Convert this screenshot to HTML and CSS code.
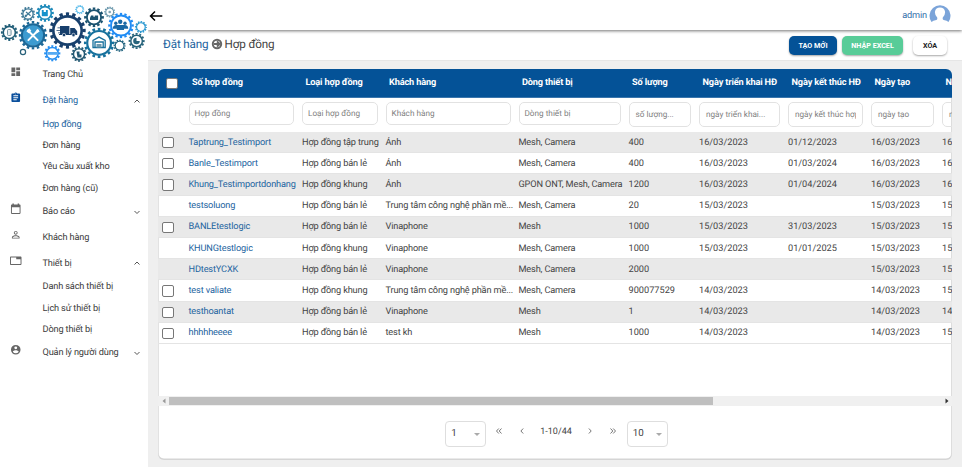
FILE: index.html
```html
<!DOCTYPE html>
<html lang="vi">
<head>
<meta charset="utf-8">
<title>Hợp đồng</title>
<link rel="stylesheet" href="styles.css">
</head>
<body>
<div class="app">
  <aside class="sidebar">
    <svg class="logo" viewBox="0 0 148 62">
      <defs>
        <symbol id="gear" viewBox="-12 -12 24 24">
          <circle r="8.3" fill="none" stroke="currentColor" stroke-width="2.2"/>
          <circle r="10.2" fill="none" stroke="currentColor" stroke-width="2.6" pathLength="120" stroke-dasharray="5.5 4.5" stroke-dashoffset="2.7"/>
        </symbol>
        <symbol id="gear-lg" viewBox="-12 -12 24 24">
          <circle r="9.2" fill="none" stroke="currentColor" stroke-width="1.7"/>
          <circle r="10.8" fill="none" stroke="currentColor" stroke-width="2" pathLength="160" stroke-dasharray="5 5" stroke-dashoffset="2.5"/>
        </symbol>
      </defs>
      <circle cx="33" cy="35.3" r="10.6" fill="#3c9bd0"/>
      <use href="#gear-lg" x="18.5" y="20.8" width="29" height="29" color="#1b6796"/>
      <path d="M28 30.5l9.6 9.6M38 30.5l-9.6 9.6" stroke="#fff" stroke-width="2" stroke-linecap="round"/>
      <path d="M26.3 31.3l3-3 2 2.4-2.6 2.6zM35 32.8l2.2-4 2.5 2.8-3.3 2z" fill="#fff"/>
      <use href="#gear-lg" x="49" y="12" width="37" height="37" color="#173f6c"/>
      <path d="M60 26h9.4v8H60zM70.2 28h4.4l2.6 3.2V35h-7zM57.5 27.5h3v.8h-3zM56.5 30h3.5v.8h-3.5zM58 32.5h3v.8h-3zM59 34h18v1H59z" fill="#173f6c"/>
      <circle cx="64" cy="35" r="1.7" fill="#173f6c" stroke="#fff" stroke-width=".6"/>
      <circle cx="73.5" cy="35" r="1.7" fill="#173f6c" stroke="#fff" stroke-width=".6"/>
      <use href="#gear" x="20.5" y="6.5" width="15" height="15" color="#3d7896"/>
      <path d="M25 16.8l6.5-6M26 12l4.6 3.8M25 14.8l1.5 2" stroke="#3d7896" stroke-width="1.2"/>
      <use href="#gear" x="35.8" y="3.8" width="18.4" height="18.4" color="#208bbb"/>
      <path d="M41.8 10h6v6.2h-6z" fill="#1592cc"/><path d="M43.7 10h2.2v2h-2.2z" fill="#fff"/>
      <use href="#gear" x=".5" y="23.7" width="17.6" height="17.6" color="#205d77"/>
      <rect x="7.5" y="29.5" width="3.6" height="6" rx="1" fill="#e9f0f3" stroke="#557e90" stroke-width=".8"/>
      <use href="#gear" x="75" y="4.8" width="9.6" height="9.6" color="#4ab5e8"/>
      <use href="#gear" x="83.7" y="7" width="20.6" height="20.6" color="#1b5370"/>
      <path d="M90 20v-2l1-2.6h2.4v1.3h1.4v-1.3h3.3v4.6z" fill="#1b5370"/>
      <use href="#gear" x="104" y="6.3" width="11.4" height="11.4" color="#6795aa"/>
      <circle cx="109.7" cy="12" r="1.3" fill="#82a6b5"/>
      <use href="#gear-lg" x="108" y="12.5" width="26" height="26" color="#218cf4"/>
      <g fill="#1968a5"><circle cx="120.2" cy="21.7" r="2.2"/><circle cx="115.8" cy="23.2" r="1.7"/><circle cx="125" cy="23.2" r="1.7"/><path d="M112.8 28.8q0-3.7 3.5-3.7h8.4q3.5 0 3.5 3.7zM116.7 30q0-5 3.7-5t3.7 5z"/></g>
      <use href="#gear" x="134.6" y="20.8" width="12.6" height="12.6" color="#2696d0"/>
      <use href="#gear" x="128.2" y="32.6" width="16.8" height="16.8" color="#28647c"/>
      <path d="M136.5 37.7a3.3 3.3 0 1 0 3.3 3.3h-3.3z" fill="#28647c"/>
      <use href="#gear" x="113.2" y="39.3" width="12.8" height="12.8" color="#1d607c"/>
      <use href="#gear-lg" x="83.6" y="27.4" width="31" height="31" color="#17719d"/>
      <path d="M93 47.5v-7l6-3.4 6.2 3.4v7zM95 47v-5h8.2v5" fill="none" stroke="#17719d" stroke-width="1.3"/><path d="M96.5 44h5v3.5h-5z" fill="#6d9aaf"/>
      <use href="#gear" x="71" y="46.2" width="16" height="16" color="#235872"/>
      <path d="M76.5 51.6h3v3h2v3h-4z" fill="#235872"/>
      <use href="#gear" x="43.8" y="44.8" width="17" height="17" color="#278ff0"/>
      <path d="M47.3 52h10v2.8h-10z" fill="#55aaf2"/>
      <circle cx="23" cy="52" r="2.6" fill="none" stroke="#29627b" stroke-width="1.2"/>
    </svg>
    <nav class="menu">
      <a class="item"><svg class="ic" viewBox="0 0 24 24"><path d="M3 13h8V3H3v10zm0 8h8v-6H3v6zm10 0h8V11h-8v10zm0-18v6h8V3h-8z"/></svg><span>Trang Chủ</span></a>
      <a class="item active"><svg class="ic" viewBox="0 0 24 24"><path d="M19 3h-4.200C14.400 1.800 13.300 1 12 1s-2.400.8-2.800 2H5c-1.100 0-2 .9-2 2v14c0 1.100.9 2 2 2h14c1.100 0 2-.9 2-2V5c0-1.100-.9-2-2-2zm-7 0c.6 0 1 .4 1 1s-.4 1-1 1-1-.4-1-1 .4-1 1-1zm2 14H7v-2h7v2zm3-4H7v-2h10v2zm0-4H7V7h10v2z"/></svg><span>Đặt hàng</span><svg class="chev" viewBox="0 0 8 8"><path d="M1.500 5.500L4 3l2.500 2.500"/></svg></a>
      <a class="sub current">Hợp đồng</a>
      <a class="sub">Đơn hàng</a>
      <a class="sub">Yêu cầu xuất kho</a>
      <a class="sub">Đơn hàng (cũ)</a>
      <a class="item"><svg class="ic" viewBox="0 0 24 24"><path d="M20 3h-1V1h-3v2H8V1H5v2H4c-1.100 0-2 .9-2 2v16c0 1.100.9 2 2 2h16c1.100 0 2-.9 2-2V5c0-1.100-.9-2-2-2zm0 18H4V9h16v12z"/></svg><span>Báo cáo</span><svg class="chev" viewBox="0 0 8 8"><path d="M1.500 3L4 5.500 6.500 3"/></svg></a>
      <a class="item"><svg class="ic" viewBox="0 0 24 24"><path d="M12 5.900a2.100 2.100 0 1 1 0 4.200 2.100 2.100 0 0 1 0-4.200m0 9c3 0 6.100 1.460 6.100 2.100v1.100H5.900V17c0-.64 3.130-2.100 6.100-2.100M12 4C9.800 4 8 5.800 8 8s1.800 4 4 4 4-1.800 4-4-1.800-4-4-4zm0 9c-2.700 0-8 1.300-8 4v3h16v-3c0-2.700-5.300-4-8-4z"/></svg><span>Khách hàng</span></a>
      <a class="item"><svg class="ic" viewBox="0 0 24 24"><path d="M22 3H2C.9 3 0 3.900 0 5v14c0 1.100.9 2 2 2h20c1.100 0 2-.9 2-2V5c0-1.100-.9-2-2-2zm0 16H2V5h11v4h9v10z"/></svg><span>Thiết bị</span><svg class="chev" viewBox="0 0 8 8"><path d="M1.500 5.500L4 3l2.500 2.500"/></svg></a>
      <a class="sub">Danh sách thiết bị</a>
      <a class="sub">Lịch sử thiết bị</a>
      <a class="sub">Dòng thiết bị</a>
      <a class="item"><svg class="ic" viewBox="0 0 24 24"><path d="M12 2a10 10 0 1 0 0 20 10 10 0 0 0 0-20zm0 3a3 3 0 1 1 0 6 3 3 0 0 1 0-6zm0 14.200a7.200 7.200 0 0 1-6-3.220c.03-2 4-3.080 6-3.080s5.970 1.090 6 3.080a7.200 7.200 0 0 1-6 3.220z"/></svg><span>Quản lý người dùng</span><svg class="chev" viewBox="0 0 8 8"><path d="M1.500 3L4 5.500 6.500 3"/></svg></a>
    </nav>
  </aside>
  <main class="main">
    <header class="topbar">
      <svg class="back" viewBox="0 0 14 12"><path d="M6 1.500L1.500 6 6 10.500M1.500 6H13.300"/></svg>
      <div class="user"><span>admin</span><svg class="avatar" viewBox="0 0 22 18"><path d="M2.500 17A10.500 10.500 0 1 1 19.500 17q-1.500-1.500-4.800-2.100-1.400-.5-.9-2.400Q16.500 9.600 16 6.500 15.300 2.600 11 2.600T6 6.500q-.5 3.100 2.200 6 .5 1.900-.9 2.400-3.300.6-4.800 2.100z" fill="#7ba4d9"/></svg></div>
    </header>
    <section class="toolbar">
      <div class="crumbs"><a>Đặt hàng</a><svg viewBox="0 0 12 12"><circle cx="6" cy="6" r="4.200"/><path d="M3 6h5.300M6 3.400L8.600 6 6 8.600"/></svg><span>Hợp đồng</span></div>
      <div class="actions"><button class="btn primary">TẠO MỚI</button><button class="btn green">NHẬP EXCEL</button><button class="btn plain">XÓA</button></div>
    </section>
    <section class="card">
      <div class="table" id="table">
        <div class="row head"><div class="cb"><i class="box"></i></div><div>Số hợp đồng</div><div>Loại hợp đồng</div><div>Khách hàng</div><div>Dòng thiết bị</div><div>Số lượng</div><div>Ngày triển khai HĐ</div><div>Ngày kết thúc HĐ</div><div>Ngày tạo</div><div>Ngày sửa</div></div>
        <div class="row filters"><div></div><div><p class="field">Hợp đồng</p></div><div><p class="field">Loại hợp đồng</p></div><div><p class="field">Khách hàng</p></div><div><p class="field">Dòng thiết bị</p></div><div><p class="field tall">số lượng...</p></div><div><p class="field tall">ngày triển khai...</p></div><div><p class="field tall"><span>ngày kết thúc hợp đồng</span></p></div><div><p class="field tall">ngày tạo</p></div><div><p class="field tall">ngày sửa</p></div></div>
      </div>
      <div class="scroll"><svg viewBox="0 0 4 6"><path d="M3.500 .5v5L.5 3z" fill="#999"/></svg><div class="track"><div class="thumb"></div></div><svg viewBox="0 0 4 6"><path d="M.5 .5v5L3.500 3z" fill="#333"/></svg></div>
      <div class="pager">
        <div class="select"><span>1</span><i></i></div>
        <svg class="pg" viewBox="0 0 8 8"><path d="M3.800 1.500L1.500 4l2.300 2.500M6.500 1.500L4.200 4l2.300 2.500"/></svg>
        <svg class="pg" viewBox="0 0 8 8"><path d="M5.200 1.500L2.900 4l2.300 2.500"/></svg>
        <span class="count">1-10/44</span>
        <svg class="pg" viewBox="0 0 8 8"><path d="M2.900 1.500L5.200 4 2.900 6.500"/></svg>
        <svg class="pg" viewBox="0 0 8 8"><path d="M1.500 1.500L3.800 4 1.500 6.500M4.200 1.500L6.500 4 4.200 6.500"/></svg>
        <div class="select"><span>10</span><i></i></div>
      </div>
    </section>
  </main>
</div>
<script src="rows.js"></script>
</body>
</html>
```
FILE: rows.js
```js
// Each record: selectable, number, type, customer, device, quantity, deploy, end, created, updated
const rows = [
  [1, 'Taptrung_Testimport', 'Hợp đồng tập trung', 'Ánh', 'Mesh, Camera', '400', '16/03/2023', '01/12/2023', '16/03/2023', '16/03/2023'],
  [1, 'Banle_Testimport', 'Hợp đồng bán lẻ', 'Ánh', 'Mesh, Camera', '400', '16/03/2023', '01/03/2024', '16/03/2023', '16/03/2023'],
  [1, 'Khung_Testimportdonhang', 'Hợp đồng khung', 'Ánh', 'GPON ONT, Mesh, Camera', '1200', '16/03/2023', '01/04/2024', '16/03/2023', '16/03/2023'],
  [0, 'testsoluong', 'Hợp đồng bán lẻ', 'Trung tâm công nghệ phần mề...', 'Mesh, Camera', '20', '15/03/2023', '', '15/03/2023', '15/03/2023'],
  [1, 'BANLEtestlogic', 'Hợp đồng bán lẻ', 'Vinaphone', 'Mesh', '1000', '15/03/2023', '31/03/2023', '15/03/2023', '15/03/2023'],
  [0, 'KHUNGtestlogic', 'Hợp đồng khung', 'Vinaphone', 'Mesh, Camera', '1000', '15/03/2023', '01/01/2025', '15/03/2023', '15/03/2023'],
  [0, 'HDtestYCXK', 'Hợp đồng bán lẻ', 'Vinaphone', 'Mesh, Camera', '2000', '', '', '15/03/2023', '15/03/2023'],
  [1, 'test valiate', 'Hợp đồng khung', 'Trung tâm công nghệ phần mề...', 'Mesh, Camera', '900077529', '14/03/2023', '', '14/03/2023', '15/03/2023'],
  [1, 'testhoantat', 'Hợp đồng bán lẻ', 'Vinaphone', 'Mesh', '1', '14/03/2023', '', '14/03/2023', '14/03/2023'],
  [1, 'hhhhheeee', 'Hợp đồng bán lẻ', 'test kh', 'Mesh', '1000', '14/03/2023', '', '14/03/2023', '15/03/2023']
];
const table = document.getElementById('table');
for (const [selectable, ...cells] of rows) {
  const row = document.createElement('div');
  row.className = 'row data';
  const first = document.createElement('div');
  first.className = 'cb';
  if (selectable) {
    const box = document.createElement('i');
    box.className = 'box';
    first.append(box);
  }
  row.append(first);
  for (const text of cells) {
    const cell = document.createElement('div');
    cell.textContent = text;
    row.append(cell);
  }
  table.append(row);
}
```
FILE: styles.css
```css
* { box-sizing: border-box; }
body { margin: 0; font-family: Roboto, "Liberation Sans", sans-serif; font-size: 9.2px; letter-spacing: -.15px; color: #444; background: #efefef; text-rendering: geometricPrecision; }
.app { display: flex; width: 962px; height: 467px; overflow: hidden; }

.sidebar { width: 148px; flex: none; background: #fff; }
.logo { display: block; width: 148px; height: 62px; }
.item { display: flex; align-items: center; height: 25.8px; padding-left: 10px; color: #3b3b3b; }
.item span { margin-left: 21px; flex: 1; }
.ic { width: 11.5px; height: 11.5px; fill: #666; position: relative; top: -3px; }
.chev { width: 8px; height: 8px; margin-right: 7px; fill: none; stroke: #555; stroke-width: 1; }
.sub { display: flex; align-items: center; height: 21.3px; padding-left: 42.5px; color: #3b3b3b; }
.active, .current { color: #2364a0; }
.active .ic { fill: #0a4f9c; }

.main { flex: 1; min-width: 0; display: flex; flex-direction: column; }
.topbar { height: 30px; flex: none; background: #fff; display: flex; align-items: center; justify-content: space-between; padding-right: 11px; box-shadow: 0 1px 3px rgba(0,0,0,.55); position: relative; z-index: 1; clip-path: inset(0 0 -6px 0); }
.back { width: 14px; height: 12px; margin: 1px 0 0 1px; fill: none; stroke: #000; stroke-width: 1.5; }
.user { display: flex; align-items: center; color: #3470aa; gap: 2px; }
.avatar { width: 22px; height: 18px; margin-top: -3px; }
.toolbar { height: 31px; flex: none; background: #fff; border-bottom: 1px solid #e6e6e6; display: flex; align-items: center; justify-content: space-between; padding: 0 15px; }
.crumbs { display: flex; align-items: center; font-size: 11.7px; margin-top: -2px; }
.crumbs a { color: #2364a0; }
.crumbs svg { width: 12px; height: 12px; margin: 0 2px; fill: none; stroke: #666; stroke-width: 2; }
.actions { display: flex; gap: 5px; }
.btn { height: 19px; border: 0; border-radius: 5px; padding: 0; font: 700 7.2px Roboto, sans-serif; color: #fff; box-shadow: 0 1px 2px rgba(0,0,0,.35); }
.primary { width: 48px; background: #045297; }
.green { width: 61px; background: #58cc98; }
.plain { width: 34px; background: #fff; color: #222; margin-left: 5px; }

.card { margin: 8px 10px 0; height: 391px; background: #fff; border-radius: 6px; overflow: hidden; box-shadow: inset 0 -1.5px 0 #d5d5d5, inset 1px 0 0 #e2e2e2, inset -1px 0 0 #ddd; }
.table { height: 327px; overflow: hidden; }
.row { display: grid; grid-template-columns: 26.5px 113.5px 83.5px 133px 110px 70.5px 89px 83px 71px 71px; align-items: center; }
.row > div { padding: 0 4px; white-space: nowrap; overflow: hidden; }
.head { height: 28.5px; background: #045297; color: #fff; font-weight: 700; font-size: 9.2px; border-bottom: 1px solid #3a76ad; }
.row.head > div { padding: 0 0 0 7.5px; }
.filters { height: 34.4px; align-items: start; }
.field { margin: 4.5px 0 0; height: 23px; border: 1px solid #e2e2e2; border-radius: 5px; padding: 0 5px; display: flex; align-items: center; font-size: 8.2px; letter-spacing: 0; color: #808080; overflow: hidden; }
.field.tall { height: 25px; padding: 0 6px; }
.field span { overflow: hidden; }
.data { height: 21.23px; border-bottom: 1px solid #e4e4e4; }
.data:nth-child(odd) { background: #e9e9e9; }
.data > div:nth-child(2) { color: #2364a0; }
.data > div:nth-child(n+6) { letter-spacing: 0; }
.box { display: block; width: 11.5px; height: 11.5px; border: 1px solid #777; border-radius: 2px; background: #fff; }
.row > .cb { padding: 1px 0 0 4px; }
.row.head > .cb { padding: 1px 0 0 8px; }
.scroll { height: 10px; background: #f0f0f0; display: flex; align-items: center; }
.scroll svg { width: 4px; height: 6px; margin: 0 3.5px; flex: none; }
.track { flex: 1; height: 8px; }
.thumb { width: 544px; height: 8px; background: #bfbfbf; }
.pager { display: flex; align-items: center; justify-content: center; margin: 14px 0 0 3px; height: 27px; letter-spacing: 0; }
.select { width: 41px; height: 26px; border: 1px solid #dedede; border-radius: 4px; display: flex; align-items: center; justify-content: space-between; padding: 0 5px; font-size: 9.8px; }
.select i { border: 3px solid transparent; border-top-color: #aaa; border-bottom: 0; margin-top: 2px; }
.pg { width: 8px; height: 8px; margin: -5px 0 0; fill: none; stroke: #666; stroke-width: .9; }
.pg:nth-of-type(1) { margin-left: 9px; }
.pg:nth-of-type(2) { margin-left: 15px; }
.count { margin: -4px 14px 0; font-size: 9px; }
.pg:nth-of-type(4) { margin: -5px 10px 0 15px; }
```
